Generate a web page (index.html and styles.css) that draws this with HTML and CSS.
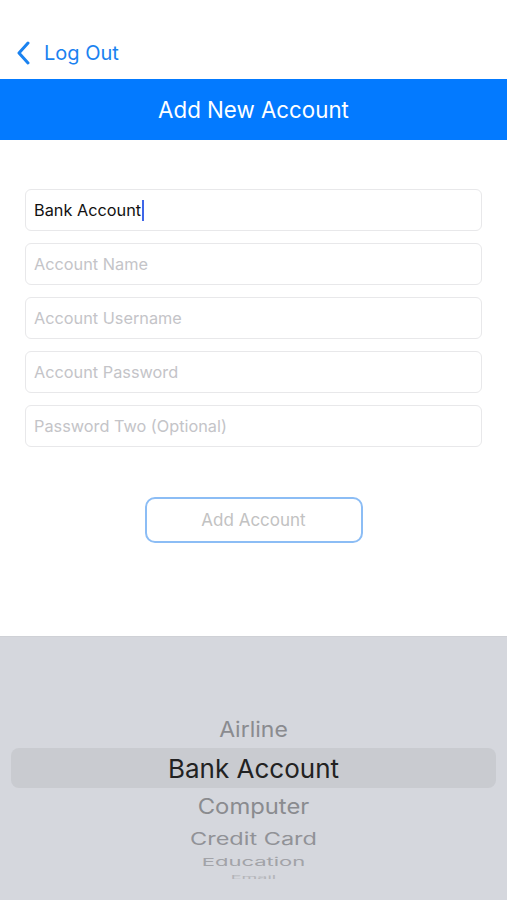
FILE: index.html
```html
<!DOCTYPE html>
<html lang="en">
<head>
  <meta charset="UTF-8" />
  <meta name="viewport" content="width=device-width, initial-scale=1" />
  <title>Add New Account</title>
  <link rel="stylesheet" href="styles.css">
</head>
<body>

  <!-- Barra superior -->
  <div class="barra">
    <a class="volver" href="#">
      <svg class="chevron" width="14" height="24" viewBox="0 0 14 24">
        <path d="M12 2 L3 12 L12 22" fill="none" stroke="#1a82f0" stroke-width="3" stroke-linecap="round" stroke-linejoin="round"/>
      </svg>
      <span>Log Out</span>
    </a>
  </div>

  <!-- Título -->
  <div class="titulo">Add New Account</div>

  <!-- Formulario -->
  <div class="formulario">
    <div class="campo"><span class="valor">Bank Account</span><span class="cursor"></span></div>
    <div class="campo placeholder">Account Name</div>
    <div class="campo placeholder">Account Username</div>
    <div class="campo placeholder">Account Password</div>
    <div class="campo placeholder">Password Two (Optional)</div>

    <button class="agregar">Add Account</button>
  </div>

  <!-- Selector -->
  <div class="selector">
    <div class="opcion arriba">Airline</div>
    <div class="opcion elegida">Bank Account</div>
    <div class="opcion abajo1">Computer</div>
    <div class="opcion abajo2">Credit Card</div>
    <div class="opcion abajo3">Education</div>
    <div class="opcion abajo4">Email</div>
  </div>

</body>
</html>
```

FILE: styles.css
```css
* {
  margin: 0;
  padding: 0;
  box-sizing: border-box;
}

html, body {
  height: 100%;
  font-family: Inter, "Liberation Sans", Arial, sans-serif;
  background-color: #fff;
}

body {
  display: flex;
  flex-direction: column;
}

/* Barra superior */
.barra {
  height: 79px;
  display: flex;
  align-items: center;
  padding: 26px 0 0 16px;
}

.volver {
  display: flex;
  align-items: center;
  gap: 14px;
  color: #1a82f0;
  text-decoration: none;
  font-size: 20px;
}

/* Título */
.titulo {
  height: 61px;
  background-color: #037aff;
  color: #fff;
  font-size: 22.3px;
  display: flex;
  align-items: center;
  justify-content: center;
}

/* Formulario */
.formulario {
  display: flex;
  flex-direction: column;
  gap: 12px;
  padding: 49px 25px 0;
}

.campo {
  height: 42px;
  border: 1px solid #e8e8ea;
  border-radius: 6px;
  padding: 0 8px;
  display: flex;
  align-items: center;
  font-size: 16.3px;
  color: #111;
}

.campo.placeholder {
  color: #c4c4c8;
}

.cursor {
  width: 2px;
  height: 21px;
  background-color: #3f66e8;
  margin-left: 1px;
}

.agregar {
  align-self: center;
  margin-top: 38px;
  width: 218px;
  height: 46px;
  border: 2px solid #8cbdf5;
  border-radius: 10px;
  background-color: #fff;
  color: #c2c2c2;
  font-family: inherit;
  font-size: 17px;
}

/* Selector */
.selector {
  margin-top: auto;
  height: 264px;
  background-color: #d5d7dd;
  border-top: 1px solid #cfd1d6;
  padding-top: 75px;
  display: flex;
  flex-direction: column;
  align-items: center;
  color: #8a8b8f;
  overflow: hidden;
}

.opcion {
  display: flex;
  align-items: center;
  justify-content: center;
}

.arriba {
  height: 36px;
  font-size: 23px;
  transform: scaleY(0.92);
}

.elegida {
  align-self: stretch;
  margin: 0 11px;
  height: 40px;
  border-radius: 8px;
  background-color: #c9cbd0;
  color: #222;
  font-size: 26px;
}

.abajo1 {
  height: 36px;
  font-size: 23.8px;
  transform: scaleY(0.9);
}

.abajo2 {
  height: 30px;
  font-size: 23.5px;
  transform: scaleY(0.72);
  color: #919297;
}

.abajo3 {
  height: 16px;
  font-size: 22px;
  transform: scaleY(0.5);
  color: #a2a3a8;
}

.abajo4 {
  height: 14px;
  font-size: 18px;
  transform: scaleY(0.25);
  color: #b3b4b8;
}
```
